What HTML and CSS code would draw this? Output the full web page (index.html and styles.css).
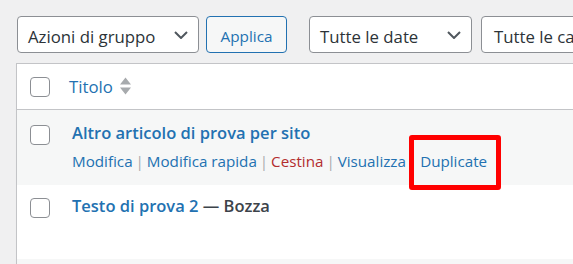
FILE: index.html
```html
<!DOCTYPE html>
<html lang="it">
<head>
<meta charset="utf-8">
<title>Articoli</title>
<link rel="stylesheet" href="styles.css">
</head>
<body>
<div class="wrap">
  <div class="tablenav">
    <div class="select sel-bulk"><span>Azioni di gruppo</span><svg class="chev" width="14" height="8" viewBox="0 0 14 8"><path d="M1 1 L7 7 L13 1" fill="none" stroke="#50575e" stroke-width="2"/></svg></div>
    <div class="btn">Applica</div>
    <div class="select sel-date"><span>Tutte le date</span><svg class="chev" width="14" height="8" viewBox="0 0 14 8"><path d="M1 1 L7 7 L13 1" fill="none" stroke="#50575e" stroke-width="2"/></svg></div>
    <div class="select sel-cat"><span>Tutte le categorie</span><svg class="chev" width="14" height="8" viewBox="0 0 14 8"><path d="M1 1 L7 7 L13 1" fill="none" stroke="#50575e" stroke-width="2"/></svg></div>
  </div>
  <div class="table">
    <div class="row head">
      <div class="cb"><span class="checkbox"></span></div>
      <div class="title"><a class="sort-link">Titolo<svg class="sort" width="11" height="18" viewBox="0 0 11 18"><path d="M0 7.5 L5.5 0.5 L11 7.5 Z M0 10.5 L5.5 17.5 L11 10.5 Z" fill="#a7aaad"/></svg></a></div>
    </div>
    <div class="row r1 alt">
      <div class="cb"><span class="checkbox"></span></div>
      <div class="title">
        <div class="row-title"><a>Altro articolo di prova per sito</a></div>
        <div class="row-actions"><a>Modifica</a><span class="sep"> | </span><a>Modifica rapida</a><span class="sep"> | </span><a class="trash">Cestina</a><span class="sep"> | </span><a>Visualizza</a><span class="sep"> | </span><span class="dup"><a>Duplicate</a></span></div>
      </div>
    </div>
    <div class="row r2">
      <div class="cb"><span class="checkbox"></span></div>
      <div class="title">
        <div class="row-title"><a>Testo di prova 2</a><span class="state"> — Bozza</span></div>
      </div>
    </div>
    <div class="row r3 alt"></div>
  </div>
</div>
</body>
</html>
```
FILE: styles.css
```css
html, body {
  margin: 0;
  padding: 0;
  background: #f0f0f1;
  overflow: hidden;
}
body {
  font-family: "Open Sans", "Noto Sans", sans-serif;
  color: #3c434a;
}
.wrap {
  padding: 16px 0 0 17px;
  width: 760px;
}
.tablenav {
  display: flex;
  height: 37px;
  margin-bottom: 10px;
}
.select {
  display: flex;
  align-items: center;
  justify-content: space-between;
  box-sizing: border-box;
  height: 37px;
  border: 1px solid #8c8f94;
  border-radius: 4px;
  background: #fff;
  padding: 3px 10px 0 10px;
  font-size: 16.8px;
  color: #2c3338;
  white-space: nowrap;
}
.sel-bulk { width: 182px; }
.sel-date { width: 163px; margin-left: 22px; }
.sel-cat { width: 200px; margin-left: 9px; padding-left: 12px; }
.chev { flex: none; margin-top: -3px; }
.btn {
  display: flex;
  align-items: center;
  justify-content: center;
  box-sizing: border-box;
  width: 81px;
  height: 37px;
  margin-left: 7px;
  padding-top: 3px;
  border: 1px solid #2271b1;
  border-radius: 4px;
  background: #f6f7f7;
  color: #2271b1;
  font-size: 15.3px;
}
.table {
  margin-left: -1px;
  border: 1px solid #c3c4c7;
  background: #fff;
  box-shadow: 0 1px 1px rgba(0, 0, 0, .04);
}
.row {
  display: flex;
  align-items: flex-start;
  box-sizing: border-box;
}
.row.alt { background: #f6f7f7; }
.cb {
  flex: none;
  width: 43px;
  box-sizing: border-box;
  padding-left: 13px;
}
.checkbox {
  display: block;
  box-sizing: border-box;
  width: 20px;
  height: 20px;
  border: 1px solid #8c8f94;
  border-radius: 4px;
  background: #fff;
}
.title { flex: 1; padding-left: 12px; }
a { color: #2271b1; text-decoration: none; }
.head {
  height: 46px;
  border-bottom: 1px solid #c3c4c7;
}
.head .cb { padding-top: 13px; }
.head .title { padding-left: 9px; padding-top: 11px; }
.sort-link {
  display: flex;
  align-items: center;
  font-size: 16.8px;
  line-height: 23px;
}
.sort { margin-left: 7px; margin-top: -2px; }
.r1 { height: 75px; }
.r1 .cb { padding-top: 15px; }
.r1 .title { padding-top: 12px; }
.r2 { height: 74px; }
.r2 .cb { padding-top: 13px; }
.r2 .title { padding-top: 10px; }
.r3 { height: 20px; }
.row-title {
  font-size: 16.5px;
  line-height: 22px;
  font-weight: 600;
  white-space: nowrap;
}
.state { color: #3c434a; }
.row-actions {
  margin-top: 7px;
  font-size: 15.2px;
  line-height: 21px;
  white-space: nowrap;
}
.sep { color: #a7aaad; word-spacing: -1px; }
.trash { color: #b32d2e; }
.dup { position: relative; }
.dup::after {
  content: "";
  position: absolute;
  left: -11px;
  top: -16px;
  width: 92px;
  height: 55px;
  box-sizing: border-box;
  border: 5px solid #ff0000;
  border-radius: 3px;
}
```
